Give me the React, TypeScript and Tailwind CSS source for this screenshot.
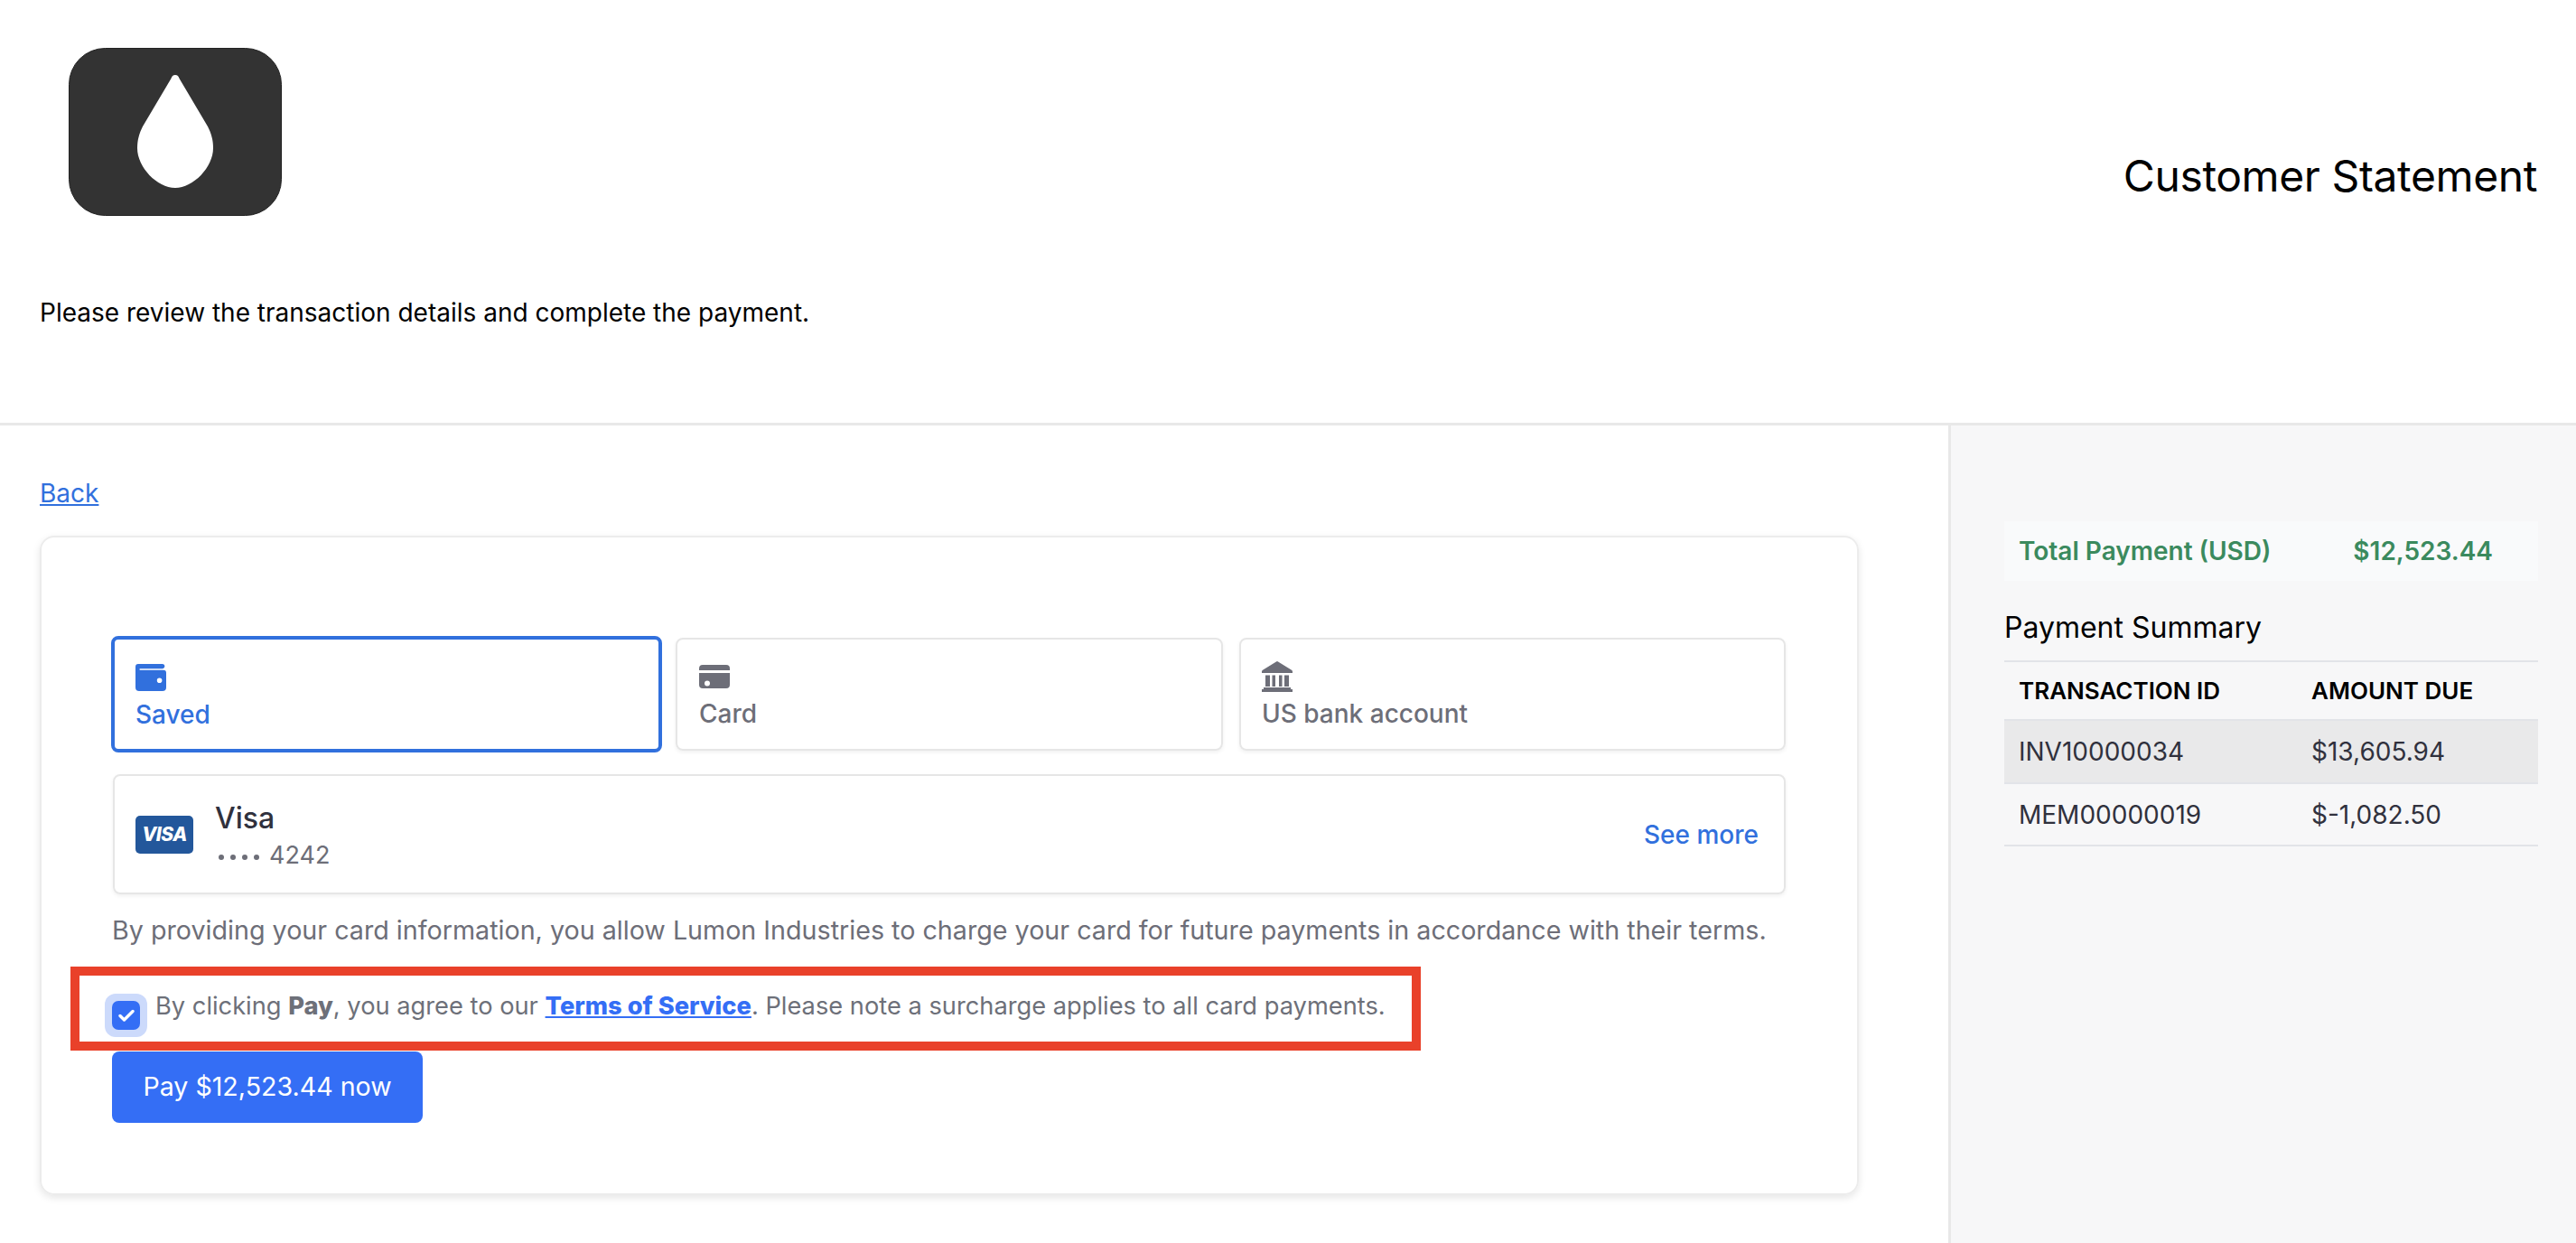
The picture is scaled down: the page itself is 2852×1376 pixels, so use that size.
import { ReactNode } from 'react';

const FONT = "font-['Inter','Noto_Sans',sans-serif]";

function Logo() {
  return (
    <svg width="236" height="186" viewBox="0 0 236 186" className="block">
      <rect x="0.5" y="0.5" width="235" height="185" rx="40" fill="#333333" stroke="#222222" />
      <path
        d="M118 30c2.600 0 3.600 1.600 4.600 4L154 87c4 8 6 15 6 24 0 21-22 44-42 44s-42-23-42-44c0-9 2-16 6-24l31.400-53c1-2.400 2-4 4.600-4z"
        fill="#ffffff"
      />
    </svg>
  );
}

function WalletIcon() {
  return (
    <svg width="34" height="30" viewBox="0 0 34 30" className="block">
      <path
        fillRule="evenodd"
        d="M3 0h27a2.600 2.600 0 0 1 2.400 2.600A2.600 2.600 0 0 1 30 5.200H4.600v1.600H31a3 3 0 0 1 3 3V26a4 4 0 0 1-4 4H4a4 4 0 0 1-4-4V3a3 3 0 0 1 3-3zM26.600 15.500a2.800 2.800 0 1 0 0 5.600 2.800 2.800 0 0 0 0-5.600z"
        fill="#3170dd"
      />
    </svg>
  );
}

function CardIcon() {
  return (
    <svg width="34" height="26" viewBox="0 0 34 26" className="block">
      <path
        fillRule="evenodd"
        d="M4 0h26a4 4 0 0 1 4 4v2H0V4a4 4 0 0 1 4-4zM0 9h34v13a4 4 0 0 1-4 4H4a4 4 0 0 1-4-4V9zm9 8.500a3 3 0 1 0 0 6 3 3 0 0 0 0-6z"
        fill="#6d6e78"
      />
    </svg>
  );
}

function BankIcon() {
  return (
    <svg width="34" height="34" viewBox="0 0 34 34" className="block">
      <path
        d="M16 .4a2 2 0 0 1 2 0l15 9.400c.9.600 1 1.200 1 2.200V13H0v-1c0-1 .1-1.600 1-2.200L16 .4zM4 15.500h5V28H4zM11.500 15.500h3.500V28h-3.500zM19 15.500h3.500V28H19zM25 15.500h5V28h-5zM2 29h30v2h2v3H0v-3h2z"
        fill="#6d6e78"
      />
    </svg>
  );
}

function VisaMark() {
  return (
    <div className="flex h-[42px] w-[64px] items-center justify-center rounded-[5px] bg-[#23579b]">
      <span className="text-[21px] leading-none font-extrabold tracking-[-0.5px] text-white italic">VISA</span>
    </div>
  );
}

interface TabProps {
  label: string;
  icon: ReactNode;
  selected?: boolean;
  extra?: string;
}

function Tab({ label, icon, selected, extra }: TabProps) {
  if (selected) {
    return (
      <div className="flex h-[129px] w-[610px] shrink-0 flex-col rounded-[8px] border-[4px] border-[#3170dd] pt-[24px] pl-[23px] text-[28px] leading-[36px] font-[550] text-[#3170dd]">
        <div className="flex h-[36px] items-center">{icon}</div>
        <div className="mt-[5px]">{label}</div>
      </div>
    );
  }
  return (
    <div className={`flex h-[125px] shrink-0 flex-col rounded-[8px] border-[2px] border-[#e6e6e6] pt-[23px] text-[28px] leading-[36px] font-[550] text-[#6d6e78] shadow-[0_2px_4px_rgba(0,0,0,0.06)] ${extra ?? ''}`}>
      <div className="flex h-[36px] items-center">{icon}</div>
      <div className="mt-[5px]">{label}</div>
    </div>
  );
}

export default function App() {
  return (
    <div className={`h-[1376px] overflow-hidden bg-white text-black ${FONT}`}>
      {/* Header */}
      <header className="h-[471px] border-b-[3px] border-[#e8e8e8] px-[44px] pt-[53px]">
        <div className="flex items-start justify-between">
          <div className="pl-[32px]">
            <Logo />
          </div>
          <h1 className="-mr-[1px] pt-[110px] text-[48px] leading-[64px] font-normal tracking-[-0.4px]">Customer Statement</h1>
        </div>
        <p className="mt-[90px] text-[28px] leading-[34px]">Please review the transaction details and complete the payment.</p>
      </header>

      <div className="flex h-[905px]">
        {/* Payment panel */}
        <main className="w-[2157px] shrink-0 pt-[57px] pl-[44px]">
          <a className="block w-fit text-[28px] leading-[36px] text-[#3170dd] underline">Back</a>
          <div className="mt-[29px] h-[730px] w-[2014px] rounded-[16px] border-[2px] border-[#ececec] pt-[109px] pl-[77px] shadow-[0_3px_8px_rgba(0,0,0,0.1)]">
            <div className="flex items-center gap-[15px]">
              <Tab label="Saved" selected icon={<WalletIcon />} />
              <Tab label="Card" icon={<CardIcon />} extra="w-[606px] pl-[24px]" />
              <Tab label="US bank account" icon={<BankIcon />} extra="ml-[3px] w-[605px] pl-[23px]" />
            </div>

            <div className="mt-[24px] ml-[2px] flex h-[133px] w-[1852px] items-center rounded-[8px] border-[2px] border-[#e6e6e6] pr-[28px] pl-[23px] shadow-[0_2px_4px_rgba(0,0,0,0.06)]">
              <VisaMark />
              <div className="ml-[24px] pt-[2px]">
                <div className="text-[32px] leading-[44px] font-medium text-[#30313d]">Visa</div>
                <div className="mt-[1px] flex items-center gap-[11px] text-[27px] leading-[36px] text-[#6d6e78]">
                  <span className="ml-[4px] flex gap-[7px] pt-[3px]">
                    <i className="h-[6px] w-[6px] rounded-full bg-[#6d6e78]" />
                    <i className="h-[6px] w-[6px] rounded-full bg-[#6d6e78]" />
                    <i className="h-[6px] w-[6px] rounded-full bg-[#6d6e78]" />
                    <i className="h-[6px] w-[6px] rounded-full bg-[#6d6e78]" />
                  </span>
                  4242
                </div>
              </div>
              <a className="ml-auto text-[28px] font-[550] text-[#3170dd]">See more</a>
            </div>

            <p className="mt-[20px] ml-[1px] text-[28.68px] leading-[40px] whitespace-nowrap text-[#6d6e78]">
              By providing your card information, you allow Lumon Industries to charge your card for future payments in accordance with their terms.
            </p>

            {/* Terms row, with the red annotation frame laid over it */}
            <div className="relative mt-[20px] ml-[1px] flex h-[93px] w-[1320px] items-center">
              <div className="pointer-events-none absolute top-0 -left-[46px] h-[93px] w-[1495px] border-[10px] border-[#e9412a]" />
              <div className="mt-[14px] ml-[-8px] flex h-[48px] w-[47px] shrink-0 items-center justify-center rounded-[12px] bg-[#ccdafb]">
                <div className="flex h-[32px] w-[31px] items-center justify-center rounded-[7px] bg-[#346ef5]">
                  <svg width="18" height="14" viewBox="0 0 18 14">
                    <path d="M2 7.500l4.500 4.500L16 2.500" fill="none" stroke="#ffffff" strokeWidth="3.400" strokeLinecap="round" strokeLinejoin="round" />
                  </svg>
                </div>
              </div>
              <p className="mt-[-4px] ml-[9px] text-[27.25px] whitespace-nowrap text-[#6d7079]">
                By clicking <b className="font-extrabold">Pay</b>, you agree to our{' '}
                <a className="font-extrabold text-[#346ef5] underline">Terms of Service</a>. Please note a surcharge applies to all card payments.
              </p>
            </div>

            <button className="mt-[1px] ml-[1px] flex h-[79px] w-[344px] items-center justify-center rounded-[8px] bg-[#346ef5] text-[28.6px] text-white">
              Pay $12,523.44 now
            </button>
          </div>
        </main>

        {/* Summary sidebar */}
        <aside className="flex-1 border-l-[3px] border-[#e8e8e8] bg-[#f7f7f8] pt-[106px] pr-[42px] pl-[59px]">
          <div className="flex h-[66px] items-center justify-between bg-[#f9fafb] pr-[50px] pl-[16px] text-[28px] font-semibold text-[#3b8a5e]">
            <span>Total Payment (USD)</span>
            <span>$12,523.44</span>
          </div>
          <h2 className="mt-[30px] text-[32px] leading-[44px] font-normal">Payment Summary</h2>
          <table className="mt-[14px] w-full border-t-[2px] border-[#e2e4e8] text-[28px]">
            <thead>
              <tr className="h-[65px] text-left text-[26px] font-semibold">
                <th className="w-[340px] pl-[16px] font-semibold">TRANSACTION ID</th>
                <th className="font-semibold">AMOUNT DUE</th>
              </tr>
            </thead>
            <tbody className="text-[#30313d]">
              <tr className="h-[70px] border-y-[2px] border-[#e2e4e8] bg-[#e9e9ea]">
                <td className="pl-[16px]">INV10000034</td>
                <td>$13,605.94</td>
              </tr>
              <tr className="h-[69px] border-b-[2px] border-[#e2e4e8]">
                <td className="pl-[16px]">MEM00000019</td>
                <td>$-1,082.50</td>
              </tr>
            </tbody>
          </table>
        </aside>
      </div>
    </div>
  );
}
